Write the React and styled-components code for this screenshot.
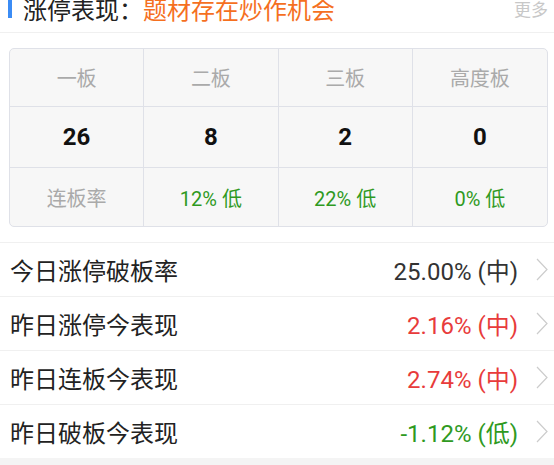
import React from 'react';
import styled, { createGlobalStyle } from 'styled-components';

const GlobalStyle = createGlobalStyle`
  body {
    margin: 0;
    background: #ffffff;
    font-family: Roboto, "Noto Sans CJK SC", sans-serif;
  }
`;

const colors = {
  up: '#e83b3b',
  down: '#2f9a1f',
  neutral: '#333333'
};

const Page = styled.div`
  width: 554px;
  height: 465px;
  overflow: hidden;
  background: #f4f4f4;
`;

const Card = styled.div`
  background: #ffffff;
`;

// header is scrolled up a little, so its top gets clipped
const Header = styled.div`
  display: flex;
  align-items: center;
  height: 48px;
  margin-top: -16px;
  padding: 0 6px 0 8px;
  border-bottom: 1px solid #f0f0f0;
`;

const Bar = styled.span`
  width: 4px;
  height: 20px;
  background: #3b8cf5;
  margin-right: 11px;
`;

const Title = styled.span`
  font-family: "Noto Sans CJK SC", sans-serif;
  font-size: 24px;
  color: #222222;
`;

const Highlight = styled(Title)`
  color: #f5701f;
`;

const More = styled.span`
  margin-left: auto;
  font-family: "Noto Sans CJK SC", sans-serif;
  font-size: 17px;
  color: #c8c8c8;
`;

const Table = styled.div`
  display: grid;
  grid-template-columns: repeat(4, 1fr);
  grid-template-rows: 58px 61px 58px;
  margin: 15px 6px 0 9px;
  background: #f7f7f7;
  border: 1px solid #dfe1e8;
  border-radius: 5px;
  overflow: hidden;
`;

const Cell = styled.div`
  display: flex;
  align-items: center;
  justify-content: center;
  border-right: ${p => (p.$last ? 'none' : '1px solid #dfe1e8')};
  border-bottom: ${p => (p.$bottom ? 'none' : '1px solid #dfe1e8')};
  font-family: Roboto, "Noto Sans CJK SC", sans-serif;
  font-size: ${p => (p.$big ? '24px' : '20px')};
  font-weight: ${p => (p.$big ? 700 : 400)};
  color: ${p => p.$color || '#aaaaaa'};
`;

const List = styled.div`
  margin-top: 15px;
`;

const Row = styled.div`
  display: flex;
  align-items: center;
  height: 53px;
  padding: 0 6px 0 10px;
  border-top: 1px solid #f0f0f0;
`;

const Label = styled.span`
  font-family: "Noto Sans CJK SC", sans-serif;
  font-size: 24px;
  color: #222222;
`;

const Value = styled.span`
  margin-left: auto;
  font-family: Roboto, "Noto Sans CJK SC", sans-serif;
  font-size: 24px;
  color: ${p => colors[p.$tone]};
`;

const Chevron = () => (
  <svg width="12" height="23" viewBox="0 0 12 23" style={{ marginLeft: 18 }}>
    <polyline points="1,1 11,11.5 1,22" fill="none" stroke="#cccccc" strokeWidth="1.2" />
  </svg>
);

const heads = ['一板', '二板', '三板', '高度板'];
const counts = ['26', '8', '2', '0'];
const rates = ['12% 低', '22% 低', '0% 低'];

const rows = [
  { label: '今日涨停破板率', value: '25.00% (中)', tone: 'neutral' },
  { label: '昨日涨停今表现', value: '2.16% (中)', tone: 'up' },
  { label: '昨日连板今表现', value: '2.74% (中)', tone: 'up' },
  { label: '昨日破板今表现', value: '-1.12% (低)', tone: 'down' }
];

const App = () => (
  <Page>
    <GlobalStyle />
    <Card>
      <Header>
        <Bar />
        <Title>涨停表现：</Title>
        <Highlight>题材存在炒作机会</Highlight>
        <More>更多</More>
      </Header>
      <Table>
        {heads.map((h, i) => (
          <Cell key={h} $last={i === 3}>{h}</Cell>
        ))}
        {counts.map((c, i) => (
          <Cell key={'c' + i} $last={i === 3} $big $color="#111111">{c}</Cell>
        ))}
        <Cell $bottom>连板率</Cell>
        {rates.map((r, i) => (
          <Cell key={r} $bottom $last={i === 2} $color={colors.down}>{r}</Cell>
        ))}
      </Table>
      <List>
        {rows.map(r => (
          <Row key={r.label}>
            <Label>{r.label}</Label>
            <Value $tone={r.tone}>{r.value}</Value>
            <Chevron />
          </Row>
        ))}
      </List>
    </Card>
  </Page>
);

export default App;
